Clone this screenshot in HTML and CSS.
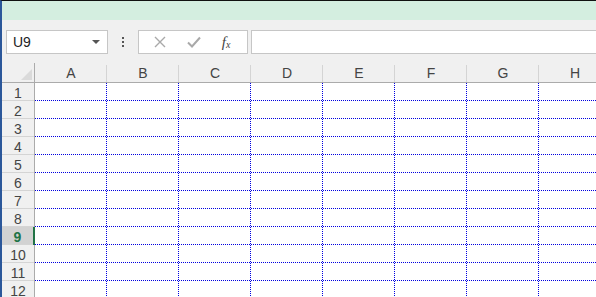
FILE: index.html
```html
<!DOCTYPE html>
<html lang="en">
<head>
  <meta charset="UTF-8">
  <title>Sheet</title>
  <link rel="stylesheet" href="styles.css">
</head>
<body>
  <div class="app">
    <div class="title-strip"></div>

    <div class="formula-row">
      <div class="name-box">
        <span class="name-text">U9</span>
        <span class="name-caret"></span>
      </div>
      <div class="grip">
        <span></span><span></span><span></span>
      </div>
      <div class="fx-buttons">
        <svg class="fx-icon" width="12" height="12" viewBox="0 0 12 12">
          <path d="M1 1 L11 11 M11 1 L1 11" stroke="#a9a9a9" stroke-width="1.4" fill="none"/>
        </svg>
        <svg class="fx-icon" width="14" height="12" viewBox="0 0 14 12">
          <path d="M1 6.5 L5 10.5 L13 1.5" stroke="#a9a9a9" stroke-width="2" fill="none"/>
        </svg>
        <span class="fx-label">f<sub>x</sub></span>
      </div>
      <div class="formula-input"></div>
    </div>

    <div class="sheet">
      <div class="corner"><span class="corner-tri"></span></div>
      <div class="col-head">A</div>
      <div class="col-head">B</div>
      <div class="col-head">C</div>
      <div class="col-head">D</div>
      <div class="col-head">E</div>
      <div class="col-head">F</div>
      <div class="col-head">G</div>
      <div class="col-head last">H</div>
    </div>
  </div>

  <script>
    // build the 12 visible rows of the grid
    const sheet = document.querySelector('.sheet');
    for (let r = 1; r <= 12; r++) {
      const head = document.createElement('div');
      head.className = 'row-head' + (r === 9 ? ' active' : '');
      head.innerText = r;
      sheet.appendChild(head);
      for (let c = 0; c < 8; c++) {
        const cell = document.createElement('div');
        cell.className = 'cell';
        sheet.appendChild(cell);
      }
    }
  </script>
</body>
</html>
```

FILE: styles.css
```css
/* Reset */
body {
  margin: 0;
  padding: 0;
  width: 596px;
  height: 297px;
  overflow: hidden;
  background: #ffffff;
  font-family: 'Liberation Sans', Arial, sans-serif;
}

.app {
  height: 296px;
  border-top: 1px solid #111;
  border-left: 2px solid #2b579a;
  background: #f0f0f0;
  overflow: hidden;
}

/* Green strip at the top */
.title-strip {
  height: 19px;
  background: #d4eee0;
}

/* Name box + formula bar */
.formula-row {
  height: 43px;
  display: flex;
  align-items: flex-start;
  padding-top: 10px;
  box-sizing: border-box;
}

.name-box {
  margin-left: 4px;
  width: 102px;
  height: 24px;
  box-sizing: border-box;
  border: 1px solid #c6c6c6;
  background: #fff;
  display: flex;
  align-items: center;
  justify-content: space-between;
  padding: 0 7px 0 6px;
}

.name-text {
  font-size: 14px;
  color: #222;
}

.name-caret {
  width: 0;
  height: 0;
  border-left: 4px solid transparent;
  border-right: 4px solid transparent;
  border-top: 4px solid #555;
}

.grip {
  width: 30px;
  height: 24px;
  display: flex;
  flex-direction: column;
  align-items: center;
  justify-content: center;
  gap: 2px;
}

.grip span {
  width: 2px;
  height: 2px;
  background: #555;
}

.fx-buttons {
  width: 110px;
  height: 24px;
  box-sizing: border-box;
  border: 1px solid #c6c6c6;
  background: #fff;
  display: flex;
  align-items: center;
  justify-content: space-around;
  padding: 0 6px 0 4px;
}

.fx-label {
  font-family: 'Liberation Serif', 'Times New Roman', serif;
  font-style: italic;
  font-size: 15px;
  color: #444;
}

.fx-label sub {
  font-size: 10px;
  vertical-align: -1px;
}

.formula-input {
  margin-left: 3px;
  flex: 1;
  height: 24px;
  box-sizing: border-box;
  border: 1px solid #c6c6c6;
  border-right: none;
  background: #fff;
}

/* Grid */
.sheet {
  display: grid;
  grid-template-columns: 33px repeat(8, 72px);
  grid-template-rows: 20px repeat(12, 18px);
  width: 700px;
}

.corner {
  position: relative;
  border-right: 1px solid #ababab;
  border-bottom: 1px solid #ababab;
}

.corner-tri {
  position: absolute;
  right: 2px;
  bottom: 2px;
  width: 0;
  height: 0;
  border-left: 11px solid transparent;
  border-bottom: 11px solid #dadada;
}

.col-head {
  position: relative;
  border-bottom: 1px solid #ababab;
  display: flex;
  align-items: center;
  justify-content: center;
  font-size: 14px;
  color: #444;
  padding-top: 1px;
}

.col-head::after {
  content: '';
  position: absolute;
  right: 0;
  top: 2px;
  bottom: 0;
  width: 1px;
  background: #d4d4d4;
}

.col-head.last::after {
  display: none;
}

.row-head {
  position: relative;
  border-right: 1px solid #ababab;
  display: flex;
  align-items: center;
  justify-content: center;
  font-size: 14px;
  color: #444;
  padding-top: 1px;
}

.row-head::after {
  content: '';
  position: absolute;
  left: 0;
  right: 0;
  bottom: 0;
  height: 1px;
  background: #d4d4d4;
}

.row-head.active {
  background: #d2d2d2;
  color: #217346;
  font-weight: bold;
  border-right: 2px solid #217346;
}

/* Dotted page-break gridlines, 1px on / 1px off */
.cell {
  background-color: #fff;
  background-image:
    linear-gradient(to right, #0000e0 1px, transparent 1px),
    linear-gradient(to bottom, #0000e0 1px, transparent 1px);
  background-size: 2px 1px, 1px 2px;
  background-repeat: repeat-x, repeat-y;
  background-position: left bottom, right top;
}
```
